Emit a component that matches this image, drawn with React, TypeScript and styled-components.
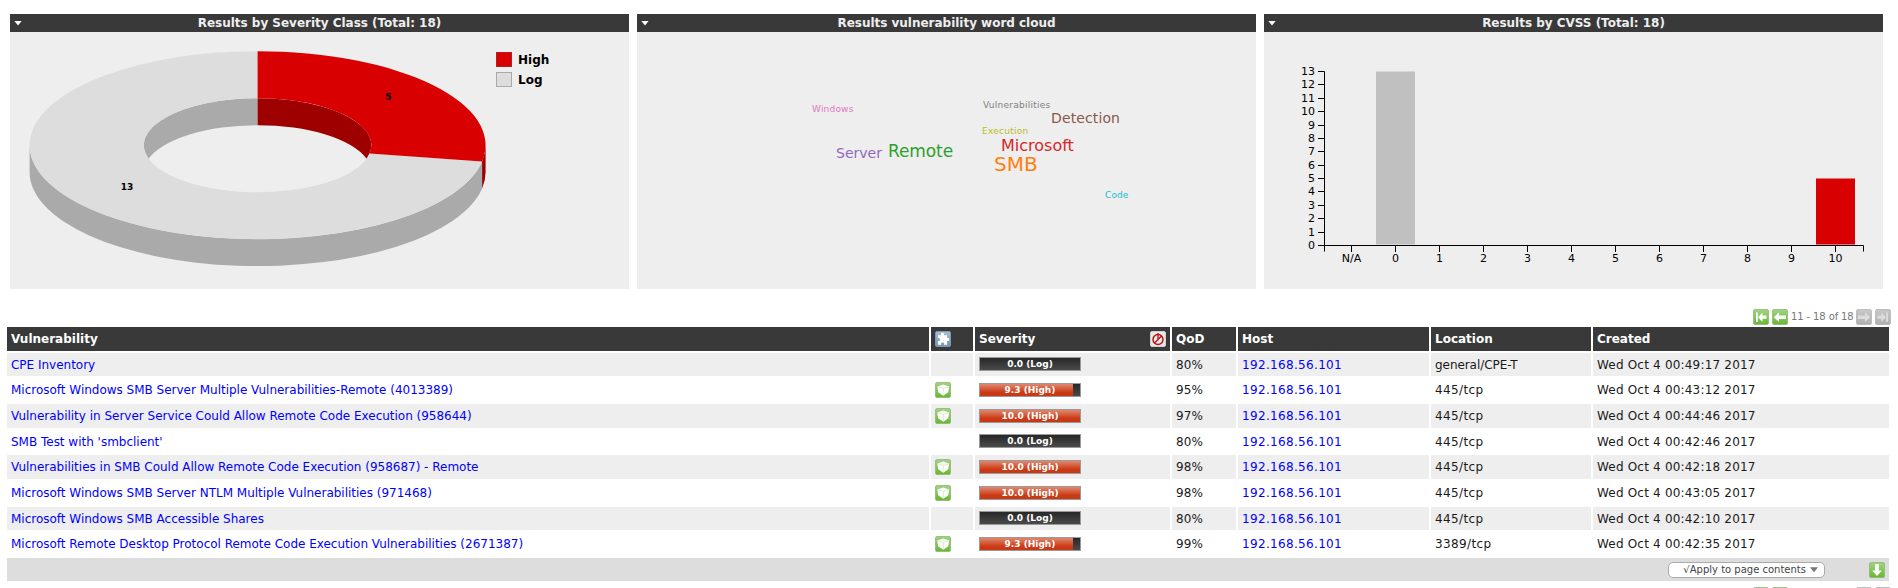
import React from "react";
import styled, { createGlobalStyle } from "styled-components";

const GlobalStyle = createGlobalStyle`
  html, body { margin: 0; padding: 0; background: #fff; overflow: hidden; }
  body { font: 12px/16px "DejaVu Sans", Verdana, sans-serif; color: #1a1a1a; }
  * { box-sizing: border-box; }
`;

const Page = styled.div`
  width: 1898px;
  height: 588px;
  overflow: hidden;
  padding-top: 14px;
`;

const Dashboard = styled.section`
  display: flex;
  gap: 8px;
  padding-left: 10px;
`;

const Panel = styled.article`
  width: 619px;
  height: 275px;
  background: #eee;
`;

const PanelHeader = styled.header`
  display: grid;
  grid-template-columns: 20px 1fr 20px;
  align-items: center;
  height: 18px;
  padding: 0 4px;
  background: #393939;
  color: #eee;
  font-weight: bold;
  line-height: 14px;
  letter-spacing: -0.02px;
  text-align: center;
`;

const Caret = styled.i<{ $color: string }>`
  display: block;
  width: 8px;
  height: 5px;
  background: ${(p) => p.$color};
  clip-path: polygon(0 0, 100% 0, 50% 100%);
`;

const Chart = styled.svg`
  display: block;
  font-family: "DejaVu Sans", Verdana, sans-serif;
`;

const Pager = styled.nav<{ $top: number }>`
  display: flex;
  align-items: center;
  justify-content: flex-end;
  gap: 3px;
  height: 16px;
  margin: ${(p) => p.$top}px 7px 0 0;
  color: #787878;
  font-size: 10px;
  letter-spacing: -0.12px;
`;

const PagerText = styled.span`
  width: 62px;
  white-space: nowrap;
`;

const Table = styled.div`
  display: grid;
  grid-template-columns: 922px 42px 195px 64px 191px 160px 296px;
  grid-auto-rows: 23.66px;
  gap: 2px;
  margin: 1.93px 0 0 7px;
`;

const HeadCell = styled.div`
  display: flex;
  align-items: center;
  justify-content: space-between;
  padding: 0 4px;
  background: #393939;
  color: #fff;
  font-weight: bold;
  white-space: nowrap;
`;

const Cell = styled.div<{ $odd: boolean }>`
  display: flex;
  align-items: center;
  padding: 0 4px;
  background: ${(p) => (p.$odd ? "#eee" : "#fff")};
  white-space: nowrap;
`;

const TextCell = styled(Cell)<{ $tracking?: number }>`
  padding-top: 0.6px;
  letter-spacing: ${(p) => p.$tracking ?? 0}px;
`;

const Link = styled.a`
  color: #00f;
  text-decoration: none;
`;

const SeverityBar = styled.div<{ $score: number }>`
  width: 102px;
  height: 14px;
  border: 1px solid #999;
  background:
    linear-gradient(#e08870, #cb3a14 70%, #c83814) 0 0 / ${(p) => p.$score * 10}% 100% no-repeat,
    linear-gradient(#272727, #4a4a4a);
  color: #fff;
  font-size: 9px;
  font-weight: bold;
  line-height: 12px;
  text-align: center;
`;

const Footer = styled.div`
  grid-column: 1 / -1;
  display: flex;
  align-items: center;
  justify-content: flex-end;
  gap: 44px;
  padding-right: 4px;
  background: #ddd;
`;

const Select = styled.div`
  display: flex;
  align-items: center;
  justify-content: flex-end;
  gap: 4px;
  width: 157px;
  height: 16px;
  padding-right: 6px;
  border: 1px solid #aaa;
  border-radius: 5px;
  background: #fff;
  color: #444;
  font-size: 10px;
  line-height: 14px;
`;

const Icon = styled.svg`
  display: block;
  flex: none;
`;

type ArrowKind = "first" | "prev" | "next" | "last" | "down";

const ARROWS: Record<ArrowKind, string> = {
  first: "M3 3.500h1.800v9.500H3zM5 8.200l4.500-4.700v3.100h4v3.200h-4v3.100z",
  prev: "M1.800 8.200l5.200-4.900v3.200h7v3.400H7v3.200z",
  next: "M14.200 8.200L9 3.300v3.200H2v3.400h7v3.200z",
  last: "M13 3.500h-1.800v9.500H13zM11 8.200L6.500 3.500v3.100h-4v3.200h4v3.100z",
  down: "M6.200 2h3.600v6.500h3L8 14 3.200 8.500h3z",
};

const Gradients = () => (
  <defs>
    <linearGradient id="green" x1="0" y1="0" x2="0" y2="1">
      <stop offset="0" stopColor="#a3d383" />
      <stop offset="1" stopColor="#66b82f" />
    </linearGradient>
    <linearGradient id="grey" x1="0" y1="0" x2="0" y2="1">
      <stop offset="0" stopColor="#c8c8c8" />
      <stop offset="1" stopColor="#b0b0b0" />
    </linearGradient>
    <linearGradient id="blue" x1="0" y1="0" x2="0" y2="1">
      <stop offset="0" stopColor="#a9bfd2" />
      <stop offset="1" stopColor="#7196b6" />
    </linearGradient>
  </defs>
);

const ArrowIcon = ({ kind, disabled = false }: { kind: ArrowKind; disabled?: boolean }) => (
  <Icon width="16" height="16" viewBox="0 0 16 16">
    <Gradients />
    <rect x=".5" y=".5" width="15" height="15" rx="1.5" fill={disabled ? "url(#grey)" : "url(#green)"} stroke={disabled ? "#b4b4b4" : "#8fb878"} strokeOpacity=".8" />
    <path d={ARROWS[kind]} fill={disabled ? "#dcdcdc" : "#fff"} />
  </Icon>
);

const PatchIcon = () => (
  <Icon width="16" height="16" viewBox="0 0 16 16">
    <Gradients />
    <rect x=".5" y=".5" width="15" height="15" rx="1.5" fill="url(#green)" stroke="#8fb878" strokeOpacity=".8" />
    <path d="M8.300 2.600L14.200 4.600 13.300 10.200 8.300 13.800 3.200 10.200 2.300 4.600z" fill="#fff" />
    <path d="M2.800 4.900l5.500 1.500 5.500-1.500M8.300 6.400v6.600" fill="none" stroke="#b9dfa2" strokeWidth=".55" />
  </Icon>
);

const PuzzleIcon = () => (
  <Icon width="16" height="16" viewBox="0 0 16 16">
    <Gradients />
    <rect x=".5" y=".5" width="15" height="15" rx="1.5" fill="url(#blue)" stroke="#7f99b0" />
    <path d="M3 4.200h3.400C5.400 2.600 6 1.800 7.500 1.800s2 .9 1.200 2.400H12v3c1.300-.7 2.200-.2 2.200 1.200S13.300 10.400 12 9.700v4H8.900c.6-1.500.2-2.200-1.200-2.200s-2 .8-1.300 2.200H3V9.900c1.300.5 2-.2 2-1.400S4.200 6.600 3 7.200z" fill="#fff" />
  </Icon>
);

const OverrideIcon = () => (
  <Icon width="16" height="16" viewBox="0 0 16 16">
    <rect x=".5" y=".5" width="15" height="15" rx="1.5" fill="#e8e8e8" stroke="#d0d0d0" />
    <circle cx="8" cy="8.500" r="5" fill="none" stroke="#b81414" strokeWidth="1.500" />
    <path d="M4.500 12L11.500 5M8 2v6" fill="none" stroke="#b81414" strokeWidth="1.300" />
  </Icon>
);

const DonutChart = () => (
  <Chart width="619" height="257" viewBox="10 32 619 257">
    <g transform="translate(-.4 .2)">
      <path d="M30 145v27a228 94 0 0 0 452.500 16.300v-27A228 94 0 0 1 30 145z" fill="#aaa" />
      <path d="M486 145v27a228 94 0 0 1-3.500 16.300v-27A228 94 0 0 0 486 145z" fill="#9e0000" />
      <path d="M258 98A113.800 47 0 0 0 149 158.500A113.800 47 0 0 1 258 125z" fill="#aaa" />
      <path d="M258 98A113.800 47 0 0 1 367 158.500A113.800 47 0 0 0 258 125z" fill="#9e0000" />
      <path d="M258 51A228 94 0 1 0 482.500 161.300L370 153.200A113.800 47 0 1 1 258 98z" fill="#ddd" />
      <path d="M258 51A228 94 0 0 1 482.500 161.300L370 153.200A113.800 47 0 0 0 258 98z" fill="#d80000" />
    </g>
    <g fontSize="9" fontWeight="bold" textAnchor="middle">
      <text x="388.500" y="100">5</text>
      <text x="127" y="190">13</text>
    </g>
    <rect x="496.500" y="52.500" width="15" height="14" fill="#d80000" stroke="#a22" />
    <rect x="496.500" y="72.500" width="15" height="14" fill="#ddd" stroke="#aaa" />
    <g fontSize="12" fontWeight="bold">
      <text x="518" y="64">High</text>
      <text x="518" y="84">Log</text>
    </g>
  </Chart>
);

const WORDS = [
  { text: "Windows", x: 812, y: 112, size: 9, color: "#e377c2", tracking: 0.2 },
  { text: "Vulnerabilities", x: 983, y: 108, size: 9, color: "#7f7f7f", tracking: 0.25 },
  { text: "Detection", x: 1051, y: 123, size: 14, color: "#8c564b", tracking: 0.12 },
  { text: "Execution", x: 982, y: 134, size: 9, color: "#bcbd22", tracking: 0.25 },
  { text: "Microsoft", x: 1001, y: 151, size: 16, color: "#d62728", tracking: 0 },
  { text: "Server", x: 836, y: 158, size: 14, color: "#9467bd", tracking: 0 },
  { text: "Remote", x: 888, y: 157, size: 17, color: "#2ca02c", tracking: -0.1 },
  { text: "SMB", x: 994, y: 171, size: 20, color: "#ff7f0e", tracking: 0 },
  { text: "Code", x: 1105, y: 198, size: 9, color: "#17becf", tracking: 0.1 },
];

const WordCloud = () => (
  <Chart width="619" height="257" viewBox="637 32 619 257">
    {WORDS.map((w) => (
      <text key={w.text} x={w.x} y={w.y} fontSize={w.size} fill={w.color} letterSpacing={w.tracking}>{w.text}</text>
    ))}
  </Chart>
);

const SCORES = ["N/A", "0", "1", "2", "3", "4", "5", "6", "7", "8", "9", "10"];

const CvssChart = () => (
  <Chart width="619" height="257" viewBox="1264 32 619 257" fontSize="11">
    <rect x="1376" y="71.500" width="39" height="173" fill="silver" />
    <rect x="1816" y="178.500" width="39" height="66" fill="#d80000" />
    <path d="M1318 71.500h6.500v174H1318M1324.500 251.500v-6h539v6" fill="none" stroke="#000" />
    {Array.from({ length: 14 }, (_, i) => {
      const y = Math.round(245 - i * 13.385);
      return (
        <g key={i}>
          <path d={`M1318 ${y + 0.5}h6`} stroke="#000" />
          <text x="1315" y={y + 4} textAnchor="end">{i}</text>
        </g>
      );
    })}
    {SCORES.map((s, i) => (
      <g key={s}>
        <path d={`M${1351.5 + i * 44} 246v6`} stroke="#000" />
        <text x={1351.5 + i * 44} y="262" textAnchor="middle">{s}</text>
      </g>
    ))}
  </Chart>
);

const PANELS = [
  { title: "Results by Severity Class (Total: 18)", chart: <DonutChart /> },
  { title: "Results vulnerability word cloud", chart: <WordCloud /> },
  { title: "Results by CVSS (Total: 18)", chart: <CvssChart /> },
];

interface Result {
  name: string;
  patch: boolean;
  score: number;
  qod: number;
  location: string;
  time: string;
}

const RESULTS: Result[] = [
  { name: "CPE Inventory", patch: false, score: 0, qod: 80, location: "general/CPE-T", time: "00:49:17" },
  { name: "Microsoft Windows SMB Server Multiple Vulnerabilities-Remote (4013389)", patch: true, score: 9.3, qod: 95, location: "445/tcp", time: "00:43:12" },
  { name: "Vulnerability in Server Service Could Allow Remote Code Execution (958644)", patch: true, score: 10, qod: 97, location: "445/tcp", time: "00:44:46" },
  { name: "SMB Test with 'smbclient'", patch: false, score: 0, qod: 80, location: "445/tcp", time: "00:42:46" },
  { name: "Vulnerabilities in SMB Could Allow Remote Code Execution (958687) - Remote", patch: true, score: 10, qod: 98, location: "445/tcp", time: "00:42:18" },
  { name: "Microsoft Windows SMB Server NTLM Multiple Vulnerabilities (971468)", patch: true, score: 10, qod: 98, location: "445/tcp", time: "00:43:05" },
  { name: "Microsoft Windows SMB Accessible Shares", patch: false, score: 0, qod: 80, location: "445/tcp", time: "00:42:10" },
  { name: "Microsoft Remote Desktop Protocol Remote Code Execution Vulnerabilities (2671387)", patch: true, score: 9.3, qod: 99, location: "3389/tcp", time: "00:42:35" },
];

const ResultRow = ({ result, odd }: { result: Result; odd: boolean }) => (
  <>
    <TextCell $odd={odd} $tracking={-0.01}><Link>{result.name}</Link></TextCell>
    <Cell $odd={odd}>{result.patch && <PatchIcon />}</Cell>
    <Cell $odd={odd}>
      <SeverityBar $score={result.score}>
        {`${result.score.toFixed(1)} (${result.score > 0 ? "High" : "Log"})`}
      </SeverityBar>
    </Cell>
    <TextCell $odd={odd} $tracking={0.1}>{`${result.qod}%`}</TextCell>
    <TextCell $odd={odd} $tracking={0.33}><Link>192.168.56.101</Link></TextCell>
    <TextCell $odd={odd} $tracking={/^\d/.test(result.location) ? 0.38 : -0.06}>{result.location}</TextCell>
    <TextCell $odd={odd} $tracking={0.19}>{`Wed Oct 4 ${result.time} 2017`}</TextCell>
  </>
);

const PageControls = ({ top, label = "" }: { top: number; label?: string }) => (
  <Pager $top={top}>
    <ArrowIcon kind="first" />
    <ArrowIcon kind="prev" />
    <PagerText>{label}</PagerText>
    <ArrowIcon kind="next" disabled />
    <ArrowIcon kind="last" disabled />
  </Pager>
);

export default function App() {
  return (
    <Page>
      <GlobalStyle />
      <Dashboard>
        {PANELS.map((p) => (
          <Panel key={p.title}>
            <PanelHeader><Caret $color="#fff" /><span>{p.title}</span></PanelHeader>
            {p.chart}
          </Panel>
        ))}
      </Dashboard>
      <PageControls top={20} label="11 - 18 of 18" />
      <Table>
        <HeadCell>Vulnerability</HeadCell>
        <HeadCell><PuzzleIcon /></HeadCell>
        <HeadCell>Severity<OverrideIcon /></HeadCell>
        <HeadCell>QoD</HeadCell>
        <HeadCell>Host</HeadCell>
        <HeadCell>Location</HeadCell>
        <HeadCell>Created</HeadCell>
        {RESULTS.map((r, i) => <ResultRow key={r.name} result={r} odd={i % 2 === 0} />)}
        <Footer>
          <Select>√Apply to page contents<Caret $color="#777" /></Select>
          <ArrowIcon kind="down" />
        </Footer>
      </Table>
      <PageControls top={5.5} />
    </Page>
  );
}
